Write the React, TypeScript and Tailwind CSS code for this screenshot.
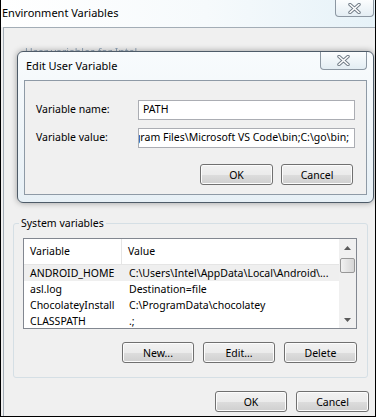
import React from 'react';

const WinButton = ({ label, className = '' }: { label: string; className?: string }) => (
  <div
    className={`flex items-center justify-center rounded-[3px] border border-[#707070] bg-[linear-gradient(#f2f2f2_0%,#ebebeb_50%,#dddddd_51%,#cfcfcf_100%)] shadow-[inset_0_0_0_1px_#fcfcfc] text-[10.5px] leading-[14px] text-black ${className}`}
  >
    {label}
  </div>
);

const CloseGlyph = () => (
  <svg width="13" height="11" viewBox="0 0 13 11">
    <path d="M2 1.5 L11 9.5 M11 1.5 L2 9.5" stroke="#6f7a85" strokeWidth="3.4" strokeLinecap="round" fill="none" />
    <path d="M2 1.5 L11 9.5 M11 1.5 L2 9.5" stroke="#ffffff" strokeWidth="1.6" strokeLinecap="round" fill="none" />
  </svg>
);

const rows = [
  { name: 'ANDROID_HOME', value: 'C:\\Users\\Intel\\AppData\\Local\\Android\\...', selected: true },
  { name: 'asl.log', value: 'Destination=file' },
  { name: 'ChocolateyInstall', value: 'C:\\ProgramData\\chocolatey' },
  { name: 'CLASSPATH', value: '.;' },
];

const Triangle = ({ down }: { down?: boolean }) => (
  <svg width="7" height="4" viewBox="0 0 7 4">
    <path d={down ? 'M0 0 L7 0 L3.5 4 Z' : 'M0 4 L7 4 L3.5 0 Z'} fill="#5a5a5a" />
  </svg>
);

export default function App() {
  return (
    <div className="relative w-[376px] h-[417px] overflow-hidden border-x border-b border-black bg-[#f0f0f0] font-['Noto_Sans',sans-serif] text-[10.5px] text-black">
      {/* title bar */}
      <div className="relative flex h-[27px] items-center bg-[linear-gradient(90deg,#ffffff_0%,#f6fafc_55%,#e6f2f8_100%)] pl-[1px] text-[11px]">
        Environment Variables
        <div className="absolute right-[1px] top-0 flex h-[17px] w-[39px] items-center justify-center rounded-b-[4px] border border-t-0 border-[#8c97a2] bg-[linear-gradient(#fbfdfe,#e3edf3)]">
          <CloseGlyph />
        </div>
      </div>

      {/* window body */}
      <div className="ml-[2px] h-[389px] border-l border-t border-[#a3adb6] bg-[#f0f0f0]">
        <div className="h-[187px] pl-[21px] pt-[17px]">
          <div className="leading-[14px] text-[#8fa3b8] blur-[0.6px]">User variables for Intel</div>
        </div>

        <fieldset className="ml-[9px] w-[355px] rounded-[3px] border border-[#d5dfe5] pb-[14px]">
          <legend className="ml-[5px] px-[2px] leading-[16px]">System variables</legend>
          <div className="ml-[9px] mt-[7px] flex h-[91px] w-[334px] overflow-hidden border border-[#828790] bg-white">
            <div className="flex-1 overflow-hidden">
              <div className="flex h-[26px] items-center border-b border-[#e5e5e5]">
                <div className="flex h-full w-[98px] items-center border-r border-[#e5e5e5] pl-[6px]">Variable</div>
                <div className="pl-[6px]">Value</div>
              </div>
              {rows.map((r) => (
                <div
                  key={r.name}
                  className={`flex h-[16px] items-center leading-[14px] whitespace-nowrap ${r.selected ? 'bg-[#efefef]' : ''}`}
                >
                  <div className="w-[99px] shrink-0 pl-[6px]">{r.name}</div>
                  <div className="pl-[6px]">{r.value}</div>
                </div>
              ))}
            </div>
            <div className="flex w-[17px] flex-col items-center bg-[#f0f0f0]">
              <div className="flex h-[17px] items-center justify-center">
                <Triangle />
              </div>
              <div className="mt-[2px] h-[15px] w-[15px] rounded-[2px] border border-[#979797] bg-[linear-gradient(90deg,#f1f1f1,#e3e3e3_50%,#d6d6d6)]" />
              <div className="flex-1" />
              <div className="flex h-[17px] items-center justify-center">
                <Triangle down />
              </div>
            </div>
          </div>
          <div className="mr-[10px] mt-[13px] flex justify-end gap-[9px]">
            <WinButton label="New..." className="h-[21px] w-[72px]" />
            <WinButton label="Edit..." className="h-[21px] w-[72px]" />
            <WinButton label="Delete" className="h-[21px] w-[73px]" />
          </div>
        </fieldset>

        <div className="mr-[6px] mt-[13px] flex justify-end gap-[9px]">
          <WinButton label="OK" className="h-[21px] w-[72px]" />
          <WinButton label="Cancel" className="h-[21px] w-[73px]" />
        </div>
      </div>

      {/* Edit User Variable dialog */}
      <div className="absolute left-[16px] top-[51px] flex h-[152px] w-[357px] flex-col rounded-[6px] border border-[#4e5b68] bg-[linear-gradient(#f8fbfd,#e7f0f6)] shadow-[0_0_6px_rgba(0,0,0,0.35)]">
        <div className="relative flex h-[28px] items-center pl-[8px] text-[11px]">
          Edit User Variable
          <div className="absolute right-[6px] top-0 flex h-[18px] w-[47px] items-center justify-center rounded-b-[4px] border border-t-0 border-[#8c97a2] bg-[linear-gradient(#fbfdfe,#e3edf3)]">
            <CloseGlyph />
          </div>
        </div>
        <div className="mx-[6px] mb-[7px] flex-1 border border-[#8e9aa6] bg-[#f0f0f0] pt-[19px]">
          <div className="flex h-[20px] items-center">
            <div className="w-[113px] pl-[11px]">Variable name:</div>
            <div className="flex h-[20px] w-[217px] items-center border border-[#abadb3] bg-white pl-[4px]">PATH</div>
          </div>
          <div className="mt-[8px] flex h-[20px] items-center">
            <div className="w-[113px] pl-[11px]">Variable value:</div>
            <div className="flex h-[20px] w-[217px] items-center justify-end overflow-hidden whitespace-nowrap border border-[#abadb3] bg-white pr-[5px]">
              C:\Program Files\Microsoft VS Code\bin;C:\go\bin;
            </div>
          </div>
          <div className="mr-[13px] mt-[16px] flex justify-end gap-[8px]">
            <WinButton label="OK" className="h-[21px] w-[73px]" />
            <WinButton label="Cancel" className="h-[21px] w-[72px]" />
          </div>
        </div>
      </div>
    </div>
  );
}
